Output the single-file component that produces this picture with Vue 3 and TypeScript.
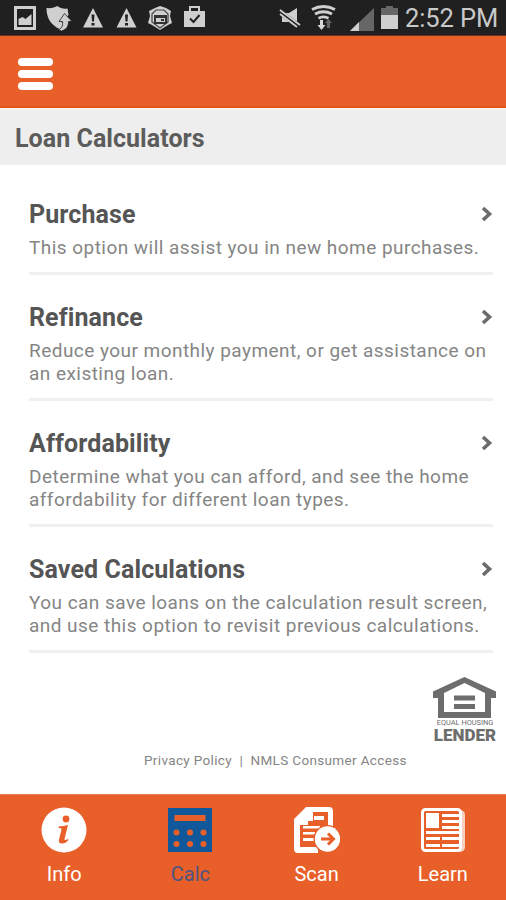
<script setup lang="ts">
interface Calculator {
  title: string
  lines: string[]
}

const calculators: Calculator[] = [
  { title: 'Purchase', lines: ['This option will assist you in new home purchases.'] },
  { title: 'Refinance', lines: ['Reduce your monthly payment, or get assistance on', 'an existing loan.'] },
  { title: 'Affordability', lines: ['Determine what you can afford, and see the home', 'affordability for different loan types.'] },
  { title: 'Saved Calculations', lines: ['You can save loans on the calculation result screen,', 'and use this option to revisit previous calculations.'] },
]

const tabs: string[] = ['Info', 'Calc', 'Scan', 'Learn']
const activeTab = 'Calc'
</script>

<template>
  <div class="screen">
    <div class="status">
      <svg class="status-left" width="210" height="36" viewBox="0 0 210 36" fill="#cfcfcf">
        <path fill-rule="evenodd" d="M14 6h22v24H14zM17 9v18h16V9z" />
        <path d="M18.500 25v-6l4-2 3 2 6-5v11z" />
        <path d="M57.500 6c3 2.500 6 3 10 2.500l1 6.500-7 8h4l-3 5-3 1c-8-4-13-10-13-21 5 .5 8-.5 11-2z" />
        <path d="M64.500 13.500l7.500 8h-3.500c0 5-2 8-7 9.500l-3-1c4-2.500 4.500-5 4-8.500h-3.500z" stroke="#202020" stroke-width="0.800" />
        <path fill-rule="evenodd" d="M93 8l10 19.500H83zM91.500 14.500l.5 7h2l.5-7zM91.500 23v2.500h3V23z" />
        <path fill-rule="evenodd" d="M126.500 8l10 19.500h-20zM125 14.500l.5 7h2l.5-7zM125 23v2.500h3V23z" />
        <path d="M155 8l5-2 6 2 5 3-1 5 2 7-4 2-8 5-8-5-4-2 2-7-1-5z" />
        <path fill="none" stroke="#444" stroke-width="1.200" d="M152 14l4-4h8l4 4v8l-8 6-8-6z" />
        <path fill="#333" fill-rule="evenodd" d="M154 15h13v9h-13zM156 18h9v4h-9z" />
        <path fill="#333" d="M161 19h3v2h-3z" />
        <path d="M184 11h21v16h-21z" />
        <path fill="none" stroke="#cfcfcf" stroke-width="2" d="M190 12V7h9v5" />
        <path fill="none" stroke="#222" stroke-width="2" d="M190 18.500l3.500 3.500 6-7" />
      </svg>
      <svg class="status-right" width="130" height="36" viewBox="270 0 130 36">
        <path fill="#cfcfcf" d="M282 13h7l8-5v18l-8-4h-7z" />
        <path stroke="#202020" stroke-width="5" d="M280 12l20 15" />
        <path stroke="#cfcfcf" stroke-width="1.800" d="M280 10l20 15M280 14l17 13" />
        <g fill="none" stroke="#cfcfcf" stroke-width="2.800">
          <path d="M312 9.500q11.500-6 23 0M315 14q8.500-4.500 17 0M318.500 18.300q5-3 10 0" />
        </g>
        <path fill="#d8d8d8" d="M320 20h3v5h2.500l-4 5-4-5h2.500z" />
        <path fill="#666" d="M327 28v-5h-2l3.500-4 3.500 4h-2v5z" />
        <path fill="#666" d="M374 8v23h-24z" />
        <path fill="#d0d0d0" d="M359 22v9h-9z" />
        <path fill="#666" d="M386 6h7v2h5v7h-17V8h5z" />
        <path fill="#d0d0d0" d="M381 15h17v14h-17z" />
      </svg>
      <span class="clock">2:52 PM</span>
    </div>

    <header class="appbar">
      <div class="menu"><i></i><i></i><i></i></div>
    </header>

    <h1 class="title"><span>Loan Calculators</span></h1>

    <main class="list">
      <section v-for="c in calculators" :key="c.title" class="item">
        <div class="head">
          <h2>{{ c.title }}</h2>
          <svg width="12" height="16" viewBox="0 0 12 16">
            <path d="M2 2l6.500 6L2 14" fill="none" stroke="#6b6b6b" stroke-width="3.600" />
          </svg>
        </div>
        <p v-for="(line, i) in c.lines" :key="i">{{ line }}</p>
      </section>
    </main>

    <footer class="legal">
      <div class="lender">
        <svg width="64" height="41" viewBox="0 0 64 41">
          <path fill="#6d6d6d" fill-rule="evenodd" d="M31.500 0L63 14.500V21h-5v20H5V21H0v-6.500zM31.500 6L11 16v19h41V16z" />
          <path fill="#6d6d6d" d="M21 18.500h21v5H21zM21 27h21v5H21z" />
        </svg>
        <span class="equal">EQUAL HOUSING</span>
        <span class="lender-word">LENDER</span>
      </div>
      <div class="links">Privacy Policy&nbsp; |&nbsp; NMLS Consumer Access</div>
    </footer>

    <nav class="tabs">
      <div v-for="t in tabs" :key="t" class="tab" :class="[t.toLowerCase(), { active: t === activeTab }]">
        <svg width="46" height="46" viewBox="0 0 46 46">
          <template v-if="t === 'Info'">
            <circle cx="23" cy="23" r="22.500" fill="#fff" />
            <circle cx="25" cy="12" r="3.400" fill="#e85f29" />
            <path fill="#e85f29" d="M17.500 19.500q5-.5 9.500-1.500l-3.500 14q-.5 2 3.500 0l.5 1q-3 3.500-6.500 3.500-4 0-3-4l2.500-10q.5-2-3-1.500z" />
          </template>
          <template v-else-if="t === 'Calc'">
            <path fill="#11589b" d="M1 1h44v44H1z" />
            <path fill="#e85f29" d="M7.500 8h31v6h-31z" />
            <g fill="#e85f29">
              <circle cx="9.500" cy="25.500" r="3" /><circle cx="23" cy="25.500" r="3" /><circle cx="36.500" cy="25.500" r="3" />
              <circle cx="9.500" cy="37" r="3" /><circle cx="23" cy="37" r="3" /><circle cx="36.500" cy="37" r="3" />
            </g>
          </template>
          <template v-else-if="t === 'Scan'">
            <path fill="#fff" fill-rule="evenodd" d="M12 0h23q4 0 4 4v19h-5V5H19v9h-5v4H6v22h18v6H4q-4 0-4-4V12z" />
            <path fill="#fff" d="M20 9h10v4H20zM9 19h17v2.500H9zM9 25h12v2.500H9zM9 31h11v3H9z" />
            <circle cx="33.500" cy="32" r="14" fill="#e85f29" />
            <circle cx="33.500" cy="32" r="12.700" fill="#fff" />
            <path fill="none" stroke="#e85f29" stroke-width="3" d="M27 32h12M34 26.500l5.500 5.500-5.500 5.500" />
          </template>
          <template v-else>
            <path fill="#f9cfbd" d="M39 3q6 0 6 5v32q0 5-6 5z" />
            <rect x="2.500" y="2.500" width="38" height="41" rx="3" fill="none" stroke="#fff" stroke-width="3" />
            <path fill="#fff" d="M6 6h13v15H6zM22 7h17v3H22zM22 13h17v3H22zM22 19h17v3H22zM6 24h33v3H6zM6 30h14v3H6zM22 30h17v3H22zM6 37h14v3H6zM22 37h17v3H22z" />
          </template>
        </svg>
        <span>{{ t }}</span>
      </div>
    </nav>
  </div>
</template>

<style>
body { margin: 0; }
</style>

<style scoped>
.screen { width: 506px; height: 900px; display: flex; flex-direction: column; background: #fff; font-family: Roboto, "Liberation Sans", sans-serif; overflow: hidden; }
.status { height: 35px; flex: none; background: #202020; display: flex; justify-content: space-between; border-bottom: 1px solid #6b3420; box-sizing: content-box; }
.status svg { display: block; flex: none; }
.status-right { margin-left: auto; }
.clock { width: 106px; padding-left: 5px; box-sizing: border-box; color: #c9c9c9; font-size: 25.5px; line-height: 36px; white-space: nowrap; letter-spacing: -0.1px; }
.appbar { height: 72px; flex: none; box-sizing: border-box; background: #e85f29; border-bottom: 2px solid #e35514; padding: 22px 18px; }
.menu { width: 35px; display: flex; flex-direction: column; gap: 4px; }
.menu i { height: 8px; border-radius: 4px; background: #fff; }
.title { margin: 0; height: 57px; flex: none; box-sizing: border-box; border-top: 2px solid #f6f0ee; background: #eee; padding-left: 15px; font-size: 25px; line-height: 57px; font-weight: 700; color: #5c5c5c; letter-spacing: 0.05px; }
.list { padding: 7px 13px 0 29px; }
.item { padding: 30px 0 13px; border-bottom: 3px solid #f0f0f0; }
.head { height: 34px; display: flex; justify-content: space-between; }
.head svg { margin-top: 4px; }
h2 { margin: 0; font-size: 25px; line-height: 26px; font-weight: 700; color: #555; letter-spacing: 0.1px; }
p { margin: 0; font-size: 19px; line-height: 23px; letter-spacing: 0.46px; color: #858585; white-space: nowrap; }
.legal { flex: 1; padding-top: 24px; display: flex; flex-direction: column; }
.lender { align-self: flex-end; width: 64px; margin-right: 9px; display: flex; flex-direction: column; align-items: center; color: #6d6d6d; }
.equal { font-size: 7.4px; line-height: 9px; white-space: nowrap; }
.lender-word { font-size: 17px; line-height: 16px; font-weight: 900; }
.links { margin: 9px 0 0 144px; font-size: 13.5px; line-height: 16px; color: #858585; letter-spacing: 0.35px; white-space: nowrap; }
.tabs { height: 106px; flex: none; box-sizing: border-box; border-top: 1px solid #ea8058; background: #e85f29; display: grid; grid-template-columns: repeat(4, 1fr); padding-left: 1px; }
.tab { padding-top: 12px; display: flex; flex-direction: column; align-items: center; color: #fff; font-size: 20px; line-height: 24px; }
.tab span { margin-top: 9px; }
.tab.active { color: #4a5583; }
</style>
